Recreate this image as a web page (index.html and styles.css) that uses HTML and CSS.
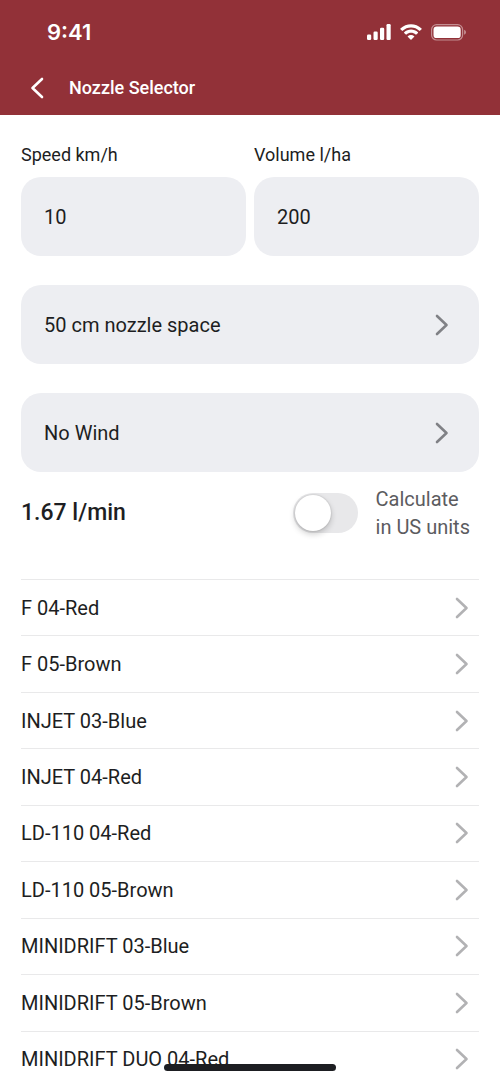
FILE: index.html
```html
<!DOCTYPE html>
<html lang="en">
<head>
<meta charset="utf-8">
<meta name="viewport" content="width=device-width, initial-scale=1">
<title>Nozzle Selector</title>
<link rel="stylesheet" href="styles.css">
</head>
<body>
<svg class="sprite" aria-hidden="true">
  <symbol id="chevron" viewBox="0 0 14 22"><path d="M2 2l9.500 9L2 20" fill="none" stroke="currentColor" stroke-width="2.600" stroke-linecap="round" stroke-linejoin="round"/></symbol>
</svg>
<div class="app">
  <header class="header">
    <div class="status">
      <span class="time">9:41</span>
      <span class="status-icons">
        <svg width="24" height="16" viewBox="0 0 24 16" fill="currentColor" aria-hidden="true">
          <rect x="0" y="10.500" width="4.200" height="5.500" rx="1.200"/><rect x="6.500" y="7.500" width="4.200" height="8.500" rx="1.200"/><rect x="13" y="3.800" width="4.200" height="12.200" rx="1.200"/><rect x="19.500" y="0" width="4.200" height="16" rx="1.200"/>
        </svg>
        <svg width="22" height="16" viewBox="0 0 17 12" fill="currentColor" aria-hidden="true">
          <path d="M8.500 2.500c2.400 0 4.700.9 6.400 2.600.1.100.3.100.5 0l1.300-1.300c.1-.1.100-.4 0-.5-4.600-4.400-11.800-4.400-16.400 0-.1.100-.1.400 0 .5l1.300 1.300c.2.100.4.100.5 0C3.800 3.400 6.100 2.500 8.500 2.500z"/>
          <path d="M8.500 6.600c1.300 0 2.600.5 3.600 1.400.1.100.4.100.5 0l1.300-1.300c.1-.2.100-.4 0-.5-3-2.900-7.700-2.900-10.700 0-.1.100-.1.300 0 .5L4.500 8c.1.100.4.100.5 0 .9-.9 2.200-1.400 3.500-1.400z"/>
          <path d="M11 9.300c.1.100.1.300 0 .4l-2.300 2.200c-.1.100-.3.100-.4 0L6 9.700c-.1-.1-.1-.3 0-.4 1.500-1.200 3.500-1.200 5 0z"/>
        </svg>
        <svg width="36" height="17" viewBox="0 0 36 17" aria-hidden="true">
          <rect x=".6" y=".6" width="31" height="15.400" rx="5" fill="none" stroke="currentColor" stroke-opacity=".45" stroke-width="1.200"/>
          <rect x="2.500" y="2.500" width="27.200" height="11.600" rx="3.200" fill="currentColor"/>
          <path d="M33.200 5.800v5c1-.4 1.700-1.400 1.700-2.500s-.7-2.100-1.700-2.500z" fill="currentColor" fill-opacity=".5"/>
        </svg>
      </span>
    </div>
    <div class="nav">
      <button class="back" type="button" aria-label="Back"><svg class="back-icon" aria-hidden="true"><use href="#chevron"/></svg></button>
      <h1 class="title">Nozzle Selector</h1>
    </div>
  </header>
  <main class="content">
    <form class="form">
      <div class="fields">
        <div class="field"><label class="label" for="speed">Speed km/h</label><input class="box" id="speed" type="text" inputmode="decimal" value="10"></div>
        <div class="field"><label class="label" for="volume">Volume l/ha</label><input class="box" id="volume" type="text" inputmode="decimal" value="200"></div>
      </div>
      <button class="box picker" type="button">50 cm nozzle space<svg class="chevron" aria-hidden="true"><use href="#chevron"/></svg></button>
      <button class="box picker" type="button">No Wind<svg class="chevron" aria-hidden="true"><use href="#chevron"/></svg></button>
    </form>
    <div class="summary">
      <strong class="rate">1.67 l/min</strong>
      <input class="switch" id="units" type="checkbox" role="switch">
      <label class="units" for="units">Calculate<br>in US units</label>
    </div>
    <ul class="list">
      <li class="item"><a class="row" href="#">F 04-Red<svg class="chevron" aria-hidden="true"><use href="#chevron"/></svg></a></li>
      <li class="item"><a class="row" href="#">F 05-Brown<svg class="chevron" aria-hidden="true"><use href="#chevron"/></svg></a></li>
      <li class="item"><a class="row" href="#">INJET 03-Blue<svg class="chevron" aria-hidden="true"><use href="#chevron"/></svg></a></li>
      <li class="item"><a class="row" href="#">INJET 04-Red<svg class="chevron" aria-hidden="true"><use href="#chevron"/></svg></a></li>
      <li class="item"><a class="row" href="#">LD-110 04-Red<svg class="chevron" aria-hidden="true"><use href="#chevron"/></svg></a></li>
      <li class="item"><a class="row" href="#">LD-110 05-Brown<svg class="chevron" aria-hidden="true"><use href="#chevron"/></svg></a></li>
      <li class="item"><a class="row" href="#">MINIDRIFT 03-Blue<svg class="chevron" aria-hidden="true"><use href="#chevron"/></svg></a></li>
      <li class="item"><a class="row" href="#">MINIDRIFT 05-Brown<svg class="chevron" aria-hidden="true"><use href="#chevron"/></svg></a></li>
      <li class="item"><a class="row" href="#">MINIDRIFT DUO 04-Red<svg class="chevron" aria-hidden="true"><use href="#chevron"/></svg></a></li>
    </ul>
  </main>
  <div class="home-indicator"></div>
</div>
</body>
</html>
```
FILE: styles.css
```css
* { box-sizing: border-box; }

body {
  margin: 0;
  background: #fff;
  color: #1d1e22;
  font-family: Roboto, "Liberation Sans", sans-serif;
  font-size: 20px;
  line-height: 28px;
}

.sprite { position: absolute; width: 0; height: 0; }

.app {
  display: flex;
  flex-direction: column;
  height: 100vh;
  overflow: hidden;
}

/* Header */
.header {
  flex: none;
  padding: 18px 21px 7px;
  background: #923138;
  color: #fff;
}

.status {
  display: flex;
  align-items: center;
  justify-content: space-between;
  height: 28px;
  padding: 0 12px 0 26px;
}

.time { font-family: Inter, sans-serif; font-size: 22px; font-weight: 600; }
.status-icons { display: flex; align-items: center; gap: 9px; }

.nav {
  display: flex;
  align-items: center;
  gap: 16px;
  margin-top: 22px;
  height: 40px;
}

.back {
  display: flex;
  align-items: center;
  justify-content: center;
  width: 32px;
  height: 40px;
  padding: 0;
  border: 0;
  background: none;
  color: inherit;
}

.back-icon { width: 14px; height: 22px; transform: scaleX(-1); }
.title { margin: 0; font-size: 18px; font-weight: 500; }

/* Form */
.content {
  flex: 1;
  min-height: 0;
  padding: 24px 21px 0;
  overflow-y: auto;
  scrollbar-width: none;
}

.form { display: flex; flex-direction: column; gap: 29px; }
.fields { display: flex; gap: 8px; }

.field {
  display: flex;
  flex: 1;
  flex-direction: column;
  gap: 6px;
  min-width: 0;
}

.label { font-size: 18px; line-height: 32px; }

.box {
  width: 100%;
  height: 79px;
  padding: 0 23px;
  border: 0;
  border-radius: 20px;
  background: #edeef2;
  color: inherit;
  font: inherit;
}

.picker {
  display: flex;
  align-items: center;
  justify-content: space-between;
  padding-right: 30px;
  text-align: left;
}

.chevron { flex: none; width: 14px; height: 22px; color: #808186; }

/* Flow rate and units */
.summary {
  display: flex;
  align-items: center;
  margin: 13px 9px 38px 0;
}

.rate { flex: 1; font-size: 23px; font-weight: 500; }

.switch {
  flex: none;
  width: 65px;
  height: 40px;
  margin: 0 18px 0 0;
  border-radius: 20px;
  background: #e8e8ea;
  appearance: none;
}

.switch::before {
  content: "";
  display: block;
  width: 36px;
  height: 36px;
  margin: 2px;
  border-radius: 50%;
  background: #fff;
  box-shadow: 0 3px 6px #0003, 0 0 2px #0003;
}

.switch:checked { background: #923138; }
.switch:checked::before { margin-left: 27px; }
.units { color: #5c5c5f; }

/* Nozzle list */
.list {
  display: grid;
  grid-auto-rows: 1fr;
  min-height: 508px;
  margin: 0;
  padding: 0;
  list-style: none;
}

.item { display: grid; border-top: 1px solid #e9e9ea; }

.row {
  display: flex;
  align-items: center;
  justify-content: space-between;
  padding-right: 10px;
  color: inherit;
  text-decoration: none;
}

.row .chevron { color: #b2b2b4; }

.home-indicator {
  position: fixed;
  bottom: 9px;
  left: 50%;
  width: 172px;
  height: 7px;
  border-radius: 4px;
  background: #1d1e22;
  transform: translateX(-50%);
}
```
